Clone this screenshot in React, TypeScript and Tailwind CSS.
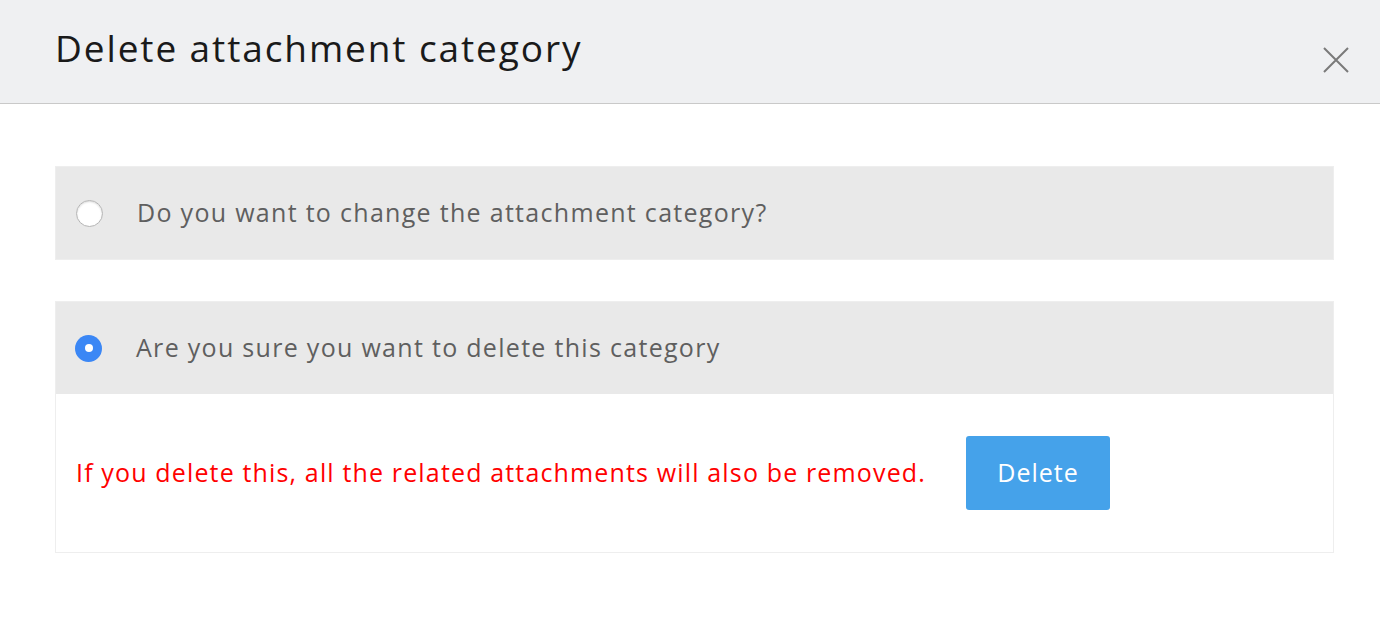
export default function App() {
  const font = { fontFamily: "'Open Sans', Lato, sans-serif" };
  return (
    <div className="w-[1380px] h-[640px] bg-white" style={font}>
      <div className="h-[104px] bg-[#eff0f2] border-b border-[#c9c9c9] flex items-start justify-between pl-[55px] pr-[30px]">
        <h1 className="pt-[22px] text-[37px] tracking-[1.9px] text-[#1a1a1a] leading-[52px] font-normal">Delete attachment category</h1>
        <button type="button" className="mt-[46px] w-[28px] h-[28px] flex items-center justify-center">
          <svg width="26" height="26" viewBox="0 0 26 26" stroke="#7a7a7a" strokeWidth="2">
            <path d="M1 1L25 25M25 1L1 25" />
          </svg>
        </button>
      </div>
      <div className="px-[55px] pr-[46px] pt-[62px]">
        <div className="h-[94px] bg-[#e9e9e9] border border-[#eeeeee] flex items-center pl-[20px]">
          <span className="w-[27px] h-[27px] rounded-full bg-white border border-[#b5b5b5] shadow-[inset_0_1px_2px_rgba(0,0,0,0.15)]" />
          <span className="ml-[34px] text-[25px] tracking-[1.3px] text-[#5f5f5f]">Do you want to change the attachment category?</span>
        </div>
        <div className="mt-[41px] border border-[#eeeeee]">
          <div className="h-[92px] bg-[#e9e9e9] flex items-center pl-[19px]">
            <span className="w-[27px] h-[27px] rounded-full bg-[#3b87f5] flex items-center justify-center">
              <span className="w-[8px] h-[8px] rounded-full bg-white" />
            </span>
            <span className="ml-[34px] text-[25px] tracking-[1.3px] text-[#5f5f5f]">Are you sure you want to delete this category</span>
          </div>
          <div className="h-[158px] flex items-center pl-[20px]">
            <span className="text-[25px] tracking-[1.15px] text-[#ff0000]">If you delete this, all the related attachments will also be removed.</span>
            <button type="button" className="ml-[40px] w-[144px] h-[74px] rounded-[3px] bg-[#45a2ea] text-white text-[25px] tracking-[1px]">Delete</button>
          </div>
        </div>
      </div>
    </div>
  );
}
